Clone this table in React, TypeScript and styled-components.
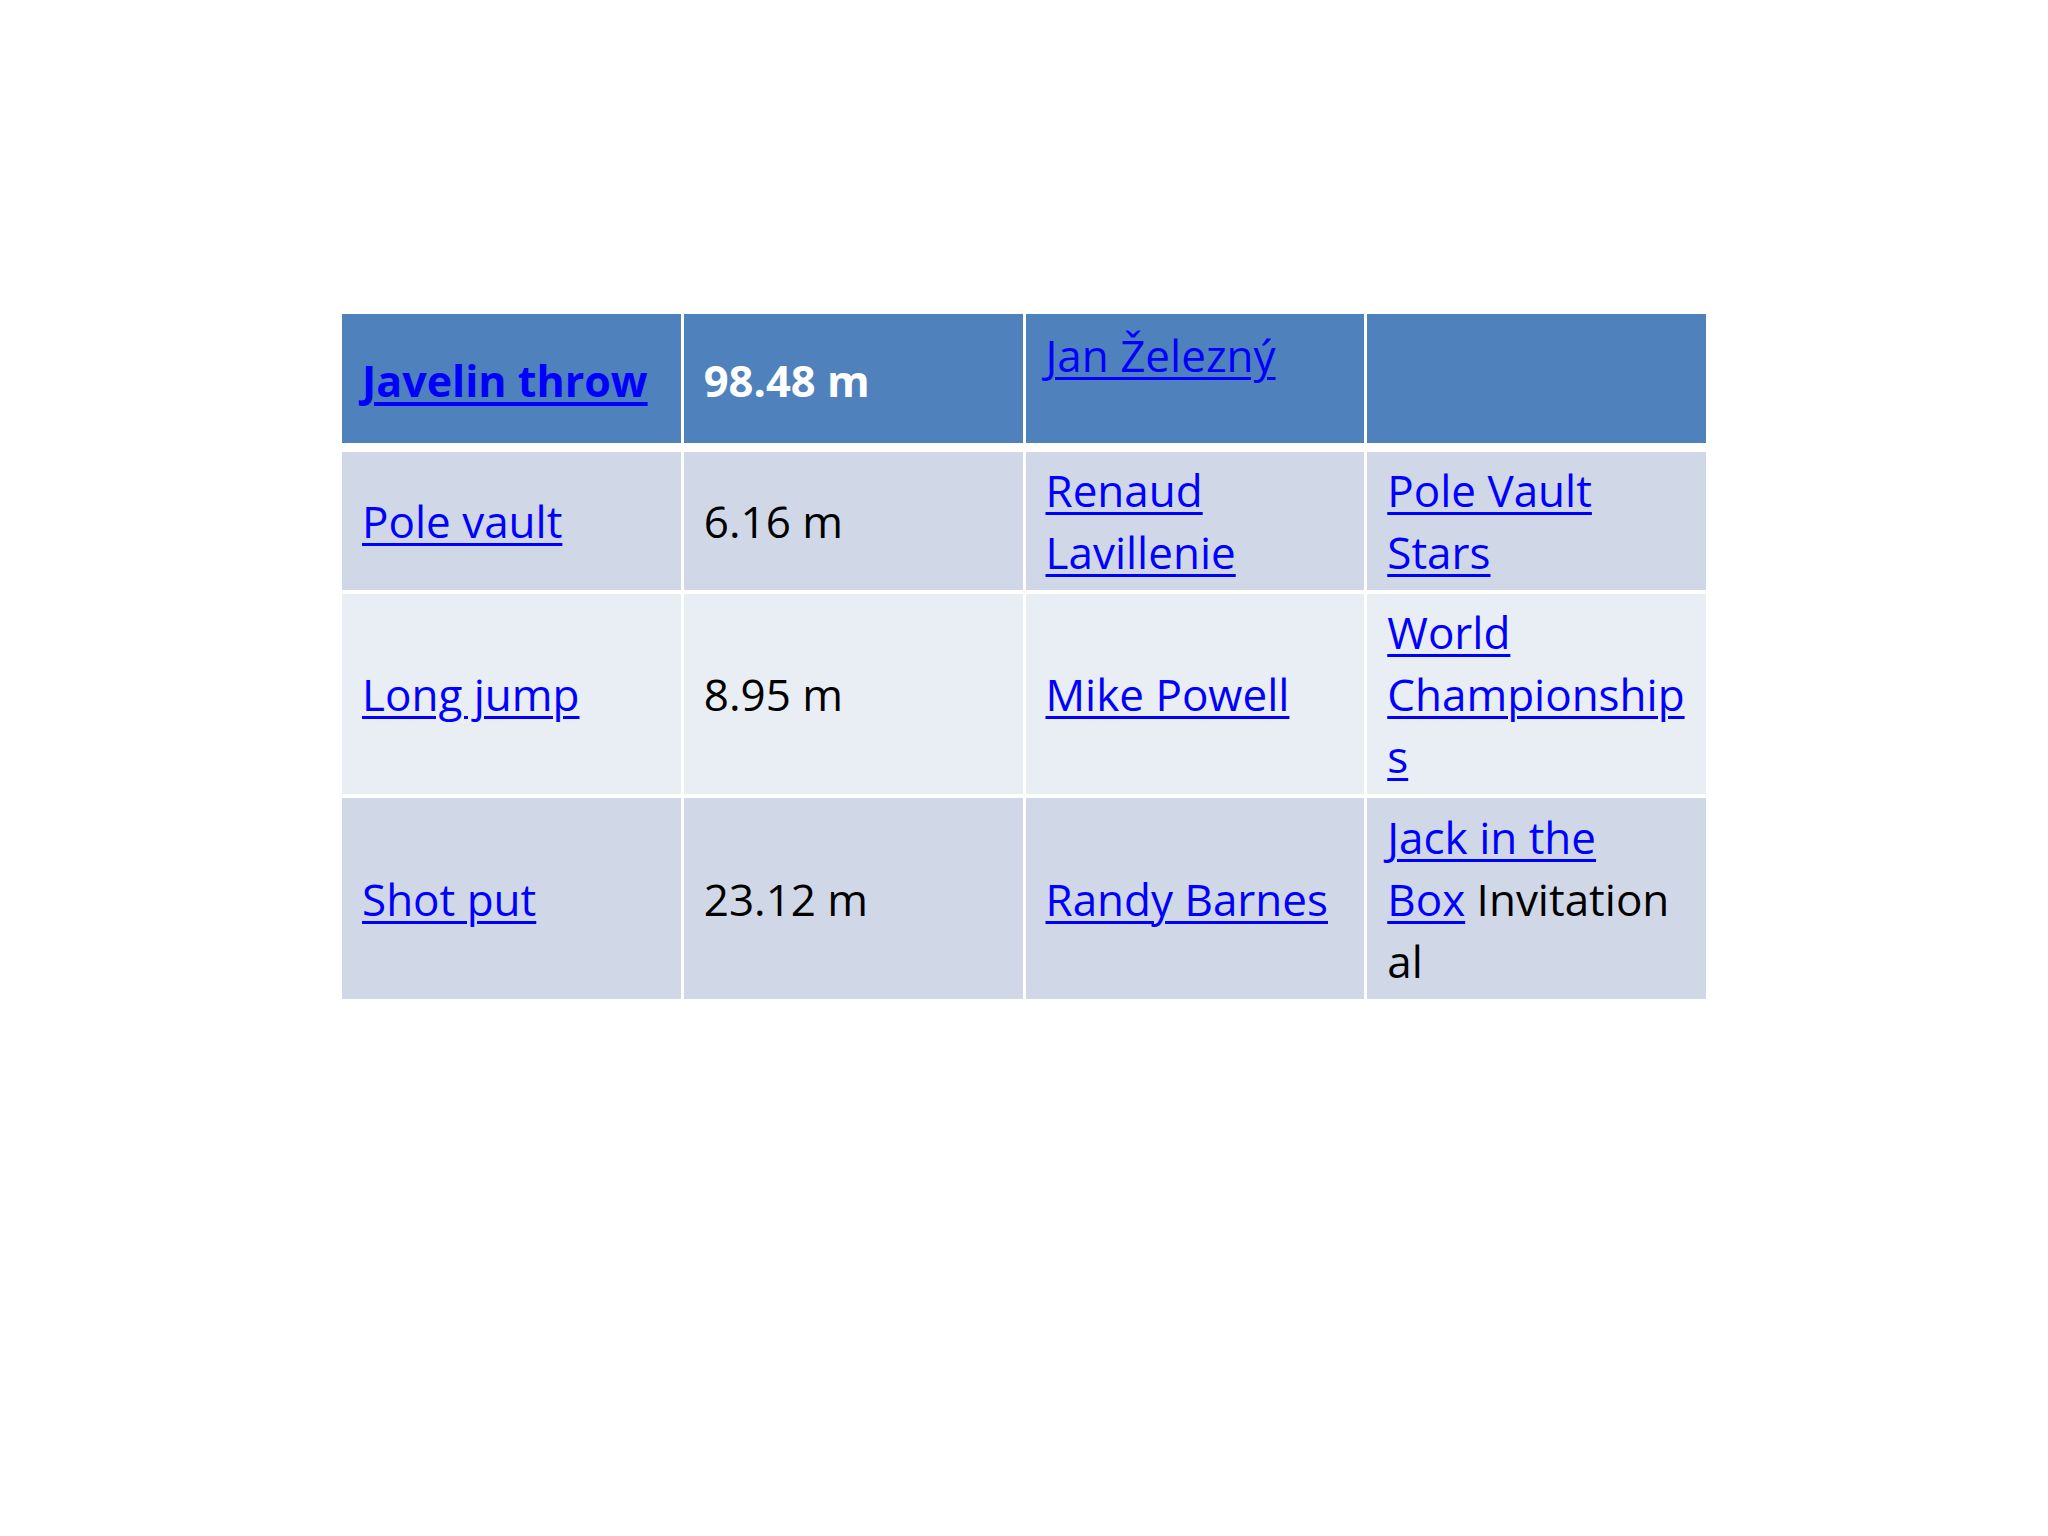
import React from "react";
import styled, { createGlobalStyle } from "styled-components";

const GlobalStyle = createGlobalStyle`
  html, body {
    margin: 0;
    padding: 0;
    background: #ffffff;
  }
  body {
    font-family: "Open Sans", "Noto Sans", "Liberation Sans", sans-serif;
  }
`;

const Page = styled.div`
  width: 2048px;
  height: 1536px;
  box-sizing: border-box;
  padding-top: 314px;
  display: flex;
  justify-content: center;
  align-items: flex-start;
  background: #ffffff;
`;

const Table = styled.div`
  width: 1364px;
  display: flex;
  flex-direction: column;
  gap: 4px;
`;

const Row = styled.div<{ $height: number; $after?: number }>`
  display: grid;
  grid-template-columns: repeat(4, 1fr);
  column-gap: 3px;
  height: ${(p) => p.$height}px;
  margin-bottom: ${(p) => p.$after ?? 0}px;
`;

const Cell = styled.div<{ $bg: string; $top?: boolean; $header?: boolean }>`
  background: ${(p) => p.$bg};
  box-sizing: border-box;
  padding: ${(p) => (p.$top ? "10px 20px 0 20px" : p.$header ? "5px 20px 0 20px" : "0 20px")};
  display: flex;
  flex-direction: column;
  justify-content: ${(p) => (p.$top ? "flex-start" : "center")};
  font-size: ${(p) => (p.$header ? 43.5 : 44)}px;
  line-height: 62px;
  font-weight: ${(p) => (p.$header ? 700 : 400)};
  color: ${(p) => (p.$header ? "#ffffff" : "#000000")};
  white-space: nowrap;
  overflow: hidden;
`;

const Line = styled.div`
  height: 62px;
`;

const Link = styled.a<{ $weight?: number }>`
  color: #0000ff;
  font-weight: ${(p) => p.$weight ?? 400};
  font-size: ${(p) => ((p.$weight ?? 400) >= 700 ? 43 : 44)}px;
  text-decoration: underline;
  text-decoration-thickness: ${(p) => ((p.$weight ?? 400) >= 700 ? 4 : 3)}px;
  text-underline-offset: 5px;
  cursor: pointer;
`;

type Seg = { t: string; link?: boolean; weight?: number };
type CellData = { lines: Seg[][]; top?: boolean };
type RowData = { height: number; after?: number; bg: string; header?: boolean; cells: CellData[] };

const HEADER = "#4f81bd";
const BAND1 = "#d0d8e8";
const BAND2 = "#e9edf4";

const rows: RowData[] = [
  {
    height: 129,
    after: 5,
    bg: HEADER,
    header: true,
    cells: [
      { lines: [[{ t: "Javelin throw", link: true, weight: 700 }]] },
      { lines: [[{ t: "98.48 m" }]] },
      { lines: [[{ t: "Jan Železný", link: true, weight: 400 }]], top: true },
      { lines: [] },
    ],
  },
  {
    height: 138,
    bg: BAND1,
    cells: [
      { lines: [[{ t: "Pole vault", link: true }]] },
      { lines: [[{ t: "6.16 m" }]] },
      { lines: [[{ t: "Renaud", link: true }], [{ t: "Lavillenie", link: true }]] },
      { lines: [[{ t: "Pole Vault", link: true }], [{ t: "Stars", link: true }]] },
    ],
  },
  {
    height: 200,
    bg: BAND2,
    cells: [
      { lines: [[{ t: "Long jump", link: true }]] },
      { lines: [[{ t: "8.95 m" }]] },
      { lines: [[{ t: "Mike Powell", link: true }]] },
      {
        lines: [
          [{ t: "World", link: true }],
          [{ t: "Championship", link: true }],
          [{ t: "s", link: true }],
        ],
      },
    ],
  },
  {
    height: 201,
    bg: BAND1,
    cells: [
      { lines: [[{ t: "Shot put", link: true }]] },
      { lines: [[{ t: "23.12 m" }]] },
      { lines: [[{ t: "Randy Barnes", link: true }]] },
      {
        lines: [
          [{ t: "Jack in the", link: true }],
          [{ t: "Box", link: true }, { t: " Invitation" }],
          [{ t: "al" }],
        ],
      },
    ],
  },
];

export default function App() {
  return (
    <>
      <GlobalStyle />
      <Page>
        <Table>
          {rows.map((row, ri) => (
            <Row key={ri} $height={row.height} $after={row.after}>
              {row.cells.map((cell, ci) => (
                <Cell key={ci} $bg={row.bg} $top={cell.top} $header={row.header}>
                  {cell.lines.map((line, li) => (
                    <Line key={li}>
                      {line.map((seg, si) =>
                        seg.link ? (
                          <Link key={si} $weight={seg.weight}>
                            {seg.t}
                          </Link>
                        ) : (
                          <span key={si}>{seg.t}</span>
                        )
                      )}
                    </Line>
                  ))}
                </Cell>
              ))}
            </Row>
          ))}
        </Table>
      </Page>
    </>
  );
}
